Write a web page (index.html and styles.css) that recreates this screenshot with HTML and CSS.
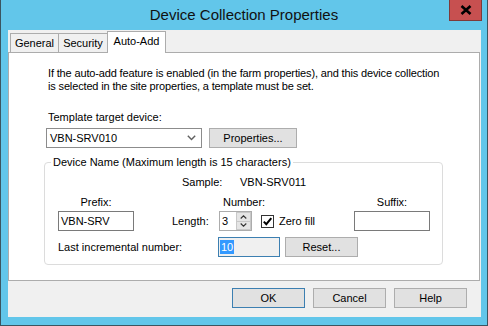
FILE: index.html
```html
<!DOCTYPE html>
<html>
<head>
<meta charset="utf-8">
<link rel="stylesheet" href="styles.css">
</head>
<body>
<div class="window">
  <div class="titlebar">
    <div class="title-spacer"></div>
    <div class="title">Device Collection Properties</div>
    <div class="title-end">
      <div class="close">
        <svg width="12" height="10" viewBox="0 0 12 10"><path d="M1.5 1 L10.5 9 M10.5 1 L1.5 9" stroke="#000" stroke-width="2.6" fill="none"/></svg>
      </div>
    </div>
  </div>
  <div class="client">
    <div class="tabs">
      <div class="tab tab-general">General</div>
      <div class="tab tab-security">Security</div>
      <div class="tab tab-auto active">Auto-Add</div>
    </div>
    <div class="panel">
      <p class="intro">If the auto-add feature is enabled (in the farm properties), and this device collection<br>is selected in the site properties, a template must be set.</p>
      <div class="field-label">Template target device:</div>
      <div class="combo-row">
        <div class="combo">
          <span class="combo-text">VBN-SRV010</span>
          <svg class="chev" width="9" height="6" viewBox="0 0 9 6"><path d="M0.8 0.8 L4.5 4.6 L8.2 0.8" stroke="#606060" stroke-width="1.4" fill="none"/></svg>
        </div>
        <div class="btn btn-props">Properties...</div>
      </div>
      <fieldset class="group">
        <legend>Device Name (Maximum length is 15 characters)</legend>
        <div class="sample-row"><span class="sample-label">Sample:</span><span>VBN-SRV011</span></div>
        <div class="name-grid">
          <div class="lbl-prefix">Prefix:</div>
          <div class="lbl-number">Number:</div>
          <div class="lbl-suffix">Suffix:</div>
          <div class="textbox prefix">VBN-SRV</div>
          <div class="lbl-length">Length:</div>
          <div class="spin">
            <div class="spin-text">3</div>
            <div class="spin-btns">
              <div class="spin-btn"><svg width="7" height="4" viewBox="0 0 7 4"><path d="M0.7 3.5 L3.5 0.8 L6.3 3.5" stroke="#333" stroke-width="1.1" fill="none"/></svg></div>
              <div class="spin-btn"><svg width="7" height="4" viewBox="0 0 7 4"><path d="M0.7 0.5 L3.5 3.2 L6.3 0.5" stroke="#333" stroke-width="1.1" fill="none"/></svg></div>
            </div>
          </div>
          <div class="check">
            <div class="checkbox"><svg width="11" height="11" viewBox="0 0 11 11"><path d="M1.8 5.6 L4.3 8.2 L9.3 2.2" stroke="#000" stroke-width="2" fill="none"/></svg></div>
            <span>Zero fill</span>
          </div>
          <div class="textbox suffix"></div>
        </div>
        <div class="last-row">
          <div class="last-label">Last incremental number:</div>
          <div class="textbox last-box"><span class="sel">10</span></div>
          <div class="btn btn-reset">Reset...</div>
        </div>
      </fieldset>
    </div>
    <div class="buttons">
      <div class="btn btn-ok">OK</div>
      <div class="btn">Cancel</div>
      <div class="btn">Help</div>
    </div>
  </div>
</div>
</body>
</html>
```

FILE: styles.css
```css
* { box-sizing: border-box; }
html, body { margin: 0; padding: 0; }
body {
  font-family: "Liberation Sans", Arial, sans-serif;
  font-size: 11px;
  color: #000;
  background: #62c6ea;
}
.window {
  width: 488px;
  height: 326px;
  background: #62c6ea;
  border-left: 1px solid #3b5560;
  border-right: 1px solid #3b5560;
  border-bottom: 1px solid #3b5560;
}
.titlebar {
  height: 30px;
  display: grid;
  grid-template-columns: 1fr auto 1fr;
  padding-right: 5px;
}
.title {
  font-size: 15px;
  line-height: 30px;
  color: #111;
  padding-left: 5px;
}
.title-end {
  display: flex;
  justify-content: flex-end;
  align-items: flex-start;
}
.close {
  width: 33px;
  height: 21px;
  background: #c75050;
  border: 1px solid #7e3a3a;
  border-top: none;
  display: flex;
  align-items: center;
  justify-content: center;
}
.client {
  margin: 0 6px 0 7px;
  height: 287px;
  background: #f0f0f0;
}
.tabs {
  display: flex;
  align-items: flex-end;
  height: 22px;
  padding-left: 2px;
  padding-top: 1px;
}
.tab {
  height: 19px;
  border: 1px solid #acacac;
  border-bottom: none;
  background: #f0f0f0;
  text-align: center;
  line-height: 18px;
  margin-right: -1px;
}
.tab-general { width: 49px; }
.tab-security { width: 50px; }
.tab-auto { width: 59px; }
.tab.active {
  height: 22px;
  background: #fff;
  line-height: 19px;
  margin-bottom: -1px;
  position: relative;
  z-index: 1;
}
.panel {
  width: 472px;
  height: 229px;
  background: #fff;
  border: 1px solid #acacac;
  padding: 14px 20px 0 35px;
}
.intro {
  margin: 0 0 0 4px;
  line-height: 13px;
  white-space: nowrap;
  letter-spacing: -0.15px;
}
.field-label {
  margin: 18px 0 0 4px;
  line-height: 13px;
}
.combo-row {
  display: flex;
  margin-top: 4px;
  margin-left: 2px;
  height: 20px;
}
.combo {
  width: 156px;
  height: 20px;
  border: 1px solid #8c8c8c;
  background: #fff;
  display: flex;
  align-items: center;
  justify-content: space-between;
  padding: 0 5px 0 3px;
}
.btn {
  width: 73px;
  height: 20px;
  background: #e1e1e1;
  border: 1px solid #adadad;
  display: flex;
  align-items: center;
  justify-content: center;
}
.btn-props {
  width: 88px;
  margin-left: 7px;
}
.group {
  margin: 8px 0 0 0;
  width: 399px;
  border: 1px solid #dcdcdc;
  border-radius: 4px;
  padding: 0 0 7px 0;
}
.group legend {
  margin-left: 6px;
  padding: 0 2px;
  line-height: 13px;
}
.sample-row {
  display: flex;
  padding-left: 137px;
  margin-top: 7px;
  line-height: 13px;
}
.sample-label { width: 58px; }
.name-grid {
  display: grid;
  grid-template-columns: 76px 38px 47px 33px 102px 76px;
  grid-template-rows: 13px 20px;
  row-gap: 2px;
  margin: 7px 0 0 13px;
  line-height: 13px;
}
.lbl-prefix { grid-column: 1; grid-row: 1; justify-self: center; }
.lbl-number { grid-column: 4 / 6; grid-row: 1; padding-left: 4px; }
.lbl-suffix { grid-column: 6; grid-row: 1; justify-self: center; }
.textbox {
  height: 20px;
  border: 1px solid #7a7a7a;
  background: #fff;
  padding-left: 2px;
  display: flex;
  align-items: center;
}
.prefix { grid-column: 1; grid-row: 2; }
.lbl-length { grid-column: 3; grid-row: 2; align-self: center; }
.spin {
  grid-column: 4;
  grid-row: 2;
  display: flex;
  border: 1px solid #acacac;
  height: 20px;
}
.spin-text {
  flex: 1;
  padding-left: 2px;
  display: flex;
  align-items: center;
}
.spin-btns {
  width: 15px;
  display: flex;
  flex-direction: column;
}
.spin-btn {
  flex: 1;
  background: #e5e5e5;
  border: 1px solid #c8c8c8;
  display: flex;
  align-items: center;
  justify-content: center;
}
.spin-btn + .spin-btn { border-top: none; }
.check {
  grid-column: 5;
  grid-row: 2;
  display: flex;
  align-items: center;
  padding-left: 9px;
  gap: 5px;
}
.checkbox {
  width: 13px;
  height: 13px;
  border: 1px solid #333;
  background: #fff;
  display: flex;
  align-items: center;
  justify-content: center;
}
.suffix { grid-column: 6; grid-row: 2; }
.last-row {
  display: flex;
  align-items: center;
  margin: 6px 0 0 13px;
  height: 20px;
}
.last-label { width: 160px; }
.last-box {
  width: 62px;
  border-color: #3c7fb1;
  background: #f0f0f0;
  padding-left: 1px;
}
.sel {
  background: #3399ff;
  color: #fff;
  line-height: 14px;
  padding: 0 1px;
}
.btn-reset { margin-left: 5px; }
.buttons {
  display: flex;
  justify-content: flex-end;
  gap: 8px;
  padding: 7px 14px 0 0;
}
.btn-ok { border-color: #3c7fb1; }
```
